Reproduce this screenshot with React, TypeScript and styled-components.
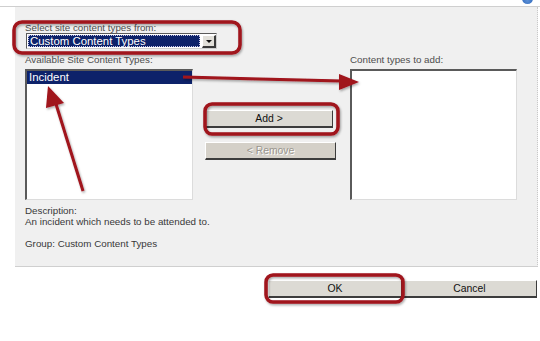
import React from "react";
import styled, { createGlobalStyle } from "styled-components";

const GlobalStyle = createGlobalStyle`
  html, body { margin: 0; padding: 0; background: #ffffff; }
  body { font-family: "Liberation Sans", Arial, sans-serif; }
  * { box-sizing: border-box; }
`;

const Page = styled.div`
  position: relative;
  width: 540px;
  height: 341px;
  overflow: hidden;
  background: #ffffff;
  display: flex;
  flex-direction: column;
`;

const TopBar = styled.div`
  height: 7px;
  border-bottom: 1px solid #cfcfcf;
  display: flex;
  justify-content: flex-end;
  padding-right: 7px;
  overflow: hidden;
`;

const HelpDot = styled.div`
  width: 11px;
  height: 11px;
  margin-top: -7px;
  border-radius: 50%;
  background: radial-gradient(circle at 50% 70%, #5b8fd6, #1d58b0);
`;

const BodyRow = styled.div`
  display: flex;
`;

const Gutter = styled.div`
  width: 15px;
  background: #ffffff;
`;

const Panel = styled.div`
  width: 523px;
  height: 260px;
  background: #f0f0f0;
  border-right: 1px dotted #c8c8c8;
  border-bottom: 1px solid #cfcfcf;
  padding: 16px 0 0 10px;
  display: flex;
  flex-direction: column;
`;

const Label = styled.div`
  font-size: 9.8px;
  line-height: 10px;
  color: #4e4e4e;
  white-space: nowrap;
`;

const SelectBox = styled.div`
  width: 191px;
  height: 16px;
  margin-left: 1px;
  display: flex;
  border: 1px solid #5a5a5a;
  border-right-color: #cfcfcf;
  border-bottom-color: #cfcfcf;
  background: #ffffff;
`;

const SelectValue = styled.div`
  flex: 1;
  margin: 1px;
  background: #0d226a;
  outline: 1px dotted #c8c8e8;
  outline-offset: -1px;
  color: #ffffff;
  font-size: 11.4px;
  line-height: 12px;
  padding-left: 2px;
  white-space: nowrap;
`;

const DropButton = styled.div`
  width: 14px;
  margin: 1px 0 0 1px;
  background: #e2e0da;
  border-top: 1px solid #ffffff;
  border-left: 1px solid #ffffff;
  border-right: 2px solid #3a3a3a;
  border-bottom: 2px solid #3a3a3a;
  display: flex;
  align-items: center;
  justify-content: center;
  &::after {
    content: "";
    width: 0;
    height: 0;
    border-left: 3px solid transparent;
    border-right: 3px solid transparent;
    border-top: 3px solid #111;
    margin-top: 1px;
  }
`;

const Columns = styled.div`
  margin-top: 6px;
  display: grid;
  grid-template-columns: 168px 133px 167px;
  column-gap: 12px;
`;

const Column = styled.div`
  display: flex;
  flex-direction: column;
`;

const ListBox = styled.div`
  margin-top: 4px;
  height: 131px;
  background: #ffffff;
  border-left: 2px solid #5a5a5a;
  border-top: 2px solid #5a5a5a;
  border-right: 1px solid #dcdcdc;
  border-bottom: 1px solid #dcdcdc;
`;

const ListItem = styled.div<{ $selected?: boolean }>`
  height: 13px;
  font-size: 11.4px;
  line-height: 13px;
  padding-left: 2px;
  color: ${(p) => (p.$selected ? "#ffffff" : "#000")};
  background: ${(p) => (p.$selected ? "#0d226a" : "transparent")};
`;

const ButtonStack = styled.div`
  padding-top: 55px;
  display: flex;
  flex-direction: column;
  gap: 14px;
`;

const Btn = styled.div<{ $disabled?: boolean; $w?: number }>`
  width: ${(p) => p.$w || 131}px;
  height: 18px;
  background: ${(p) => (p.$disabled ? "#d4d0c8" : "#dcdad4")};
  border-top: 1px solid #ffffff;
  border-left: 1px solid #ffffff;
  border-right: 1px solid #3c3c3c;
  border-bottom: 2px solid #3c3c3c;
  font-size: 10.4px;
  line-height: 15px;
  text-align: center;
  color: ${(p) => (p.$disabled ? "#9a968e" : "#111")};
  text-shadow: ${(p) => (p.$disabled ? "1px 1px 0 #ffffff" : "none")};
  white-space: nowrap;
`;

const Description = styled.div`
  margin-top: 5px;
  font-size: 9.8px;
  line-height: 11px;
  color: #383838;
  display: flex;
  flex-direction: column;
`;

const Group = styled.div`
  margin-top: 11px;
`;

const Footer = styled.div`
  margin-top: 13px;
  padding-right: 3px;
  display: flex;
  justify-content: flex-end;
`;

const Overlay = styled.svg`
  position: absolute;
  left: 0;
  top: 0;
  pointer-events: none;
`;

const RED = "#a0121b";

export default function App() {
  return (
    <>
      <GlobalStyle />
      <Page>
        <TopBar>
          <HelpDot />
        </TopBar>
        <BodyRow>
          <Gutter />
          <Panel>
            <Label>Select site content types from:</Label>
            <SelectBox>
              <SelectValue>Custom Content Types</SelectValue>
              <DropButton />
            </SelectBox>
            <Columns>
              <Column>
                <Label>Available Site Content Types:</Label>
                <ListBox>
                  <ListItem $selected>Incident</ListItem>
                </ListBox>
              </Column>
              <ButtonStack>
                <Btn $w={128}>Add &gt;</Btn>
                <Btn $disabled>&lt; Remove</Btn>
              </ButtonStack>
              <Column>
                <Label>Content types to add:</Label>
                <ListBox />
              </Column>
            </Columns>
            <Description>
              <span>Description:</span>
              <span>An incident which needs to be attended to.</span>
              <Group>Group: Custom Content Types</Group>
            </Description>
          </Panel>
        </BodyRow>
        <Footer>
          <Btn $w={134}>OK</Btn>
          <Btn $w={135}>Cancel</Btn>
        </Footer>
        <Overlay width={540} height={341} viewBox="0 0 540 341">
          <defs>
            <filter id="sh" x="-10%" y="-10%" width="130%" height="140%">
              <feDropShadow dx="1" dy="1.5" stdDeviation="1" floodColor="#000" floodOpacity="0.35" />
            </filter>
          </defs>
          <g filter="url(#sh)" fill="none" stroke={RED} strokeWidth={3.5}>
            <rect x={14} y={22} width={226} height={31} rx={8} />
            <rect x={205} y={104} width={133} height={30} rx={7} />
            <rect x={266} y={275} width={137} height={27} rx={7} />
          </g>
          <g filter="url(#sh)">
            <line x1={183} y1={77} x2={342} y2={81} stroke={RED} strokeWidth={3} />
            <polygon points="359,82 339,74 339,90" fill={RED} />
            <line x1={56} y1={104} x2={83} y2={191} stroke={RED} strokeWidth={3} />
            <polygon points="48,86 46,108 64,103" fill={RED} />
          </g>
        </Overlay>
      </Page>
    </>
  );
}
